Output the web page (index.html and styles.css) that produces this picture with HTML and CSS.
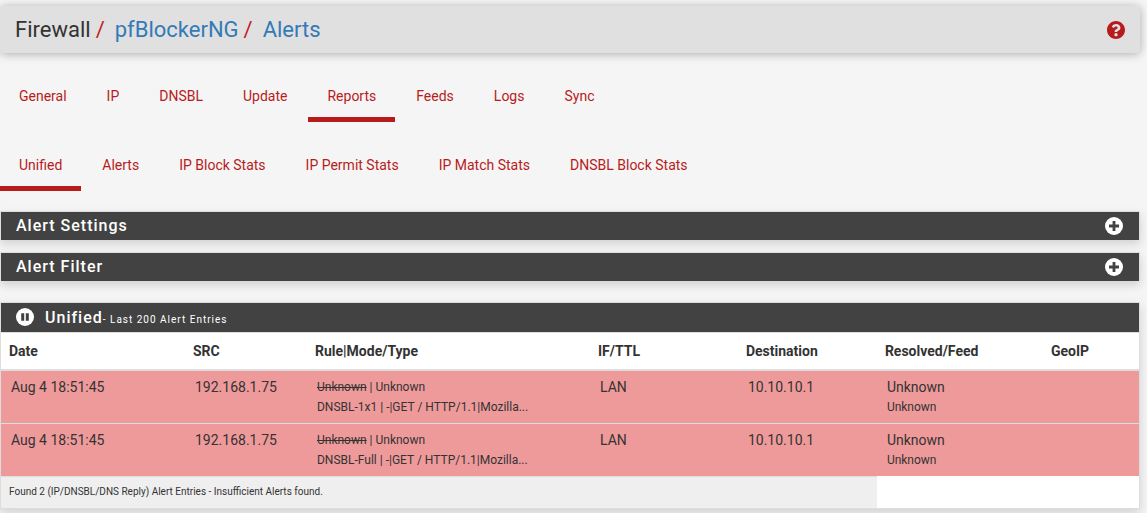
FILE: index.html
```html
<!DOCTYPE html>
<html lang="en">
<head>
<meta charset="utf-8">
<title>Firewall / pfBlockerNG / Alerts</title>
<link rel="stylesheet" href="styles.css">
</head>
<body>
<main class="page">
  <header class="header">
    <nav class="breadcrumb" aria-label="Breadcrumb">
      <span>Firewall</span><span class="sep">/</span><a href="#">pfBlockerNG</a><span class="sep">/</span><a href="#">Alerts</a>
    </nav>
    <a class="help" href="#" aria-label="Help">
      <svg class="icon" viewBox="8 8 496 496"><path fill="currentColor" d="M504 256c0 136.997-111.043 248-248 248S8 392.997 8 256C8 119.083 119.043 8 256 8s248 111.083 248 248zM262.655 90c-54.497 0-89.255 22.957-116.549 63.758-3.536 5.286-2.353 12.415 2.715 16.258l34.699 26.31c5.205 3.947 12.621 3.008 16.665-2.122 17.864-22.658 30.113-35.797 57.303-35.797 20.429 0 45.698 13.148 45.698 32.958 0 14.976-12.363 22.667-32.534 33.976C247.128 238.528 216 254.941 216 296v4c0 6.627 5.373 12 12 12h56c6.627 0 12-5.373 12-12v-1.333c0-28.462 83.186-29.647 83.186-106.667 0-58.002-60.165-102-116.531-102zM256 338c-25.365 0-46 20.635-46 46 0 25.364 20.635 46 46 46s46-20.636 46-46c0-25.364-20.635-46-46-46z"/></svg>
    </a>
  </header>

  <nav class="tabs" aria-label="Sections">
    <a href="#">General</a>
    <a href="#">IP</a>
    <a href="#">DNSBL</a>
    <a href="#">Update</a>
    <a href="#" class="active">Reports</a>
    <a href="#">Feeds</a>
    <a href="#">Logs</a>
    <a href="#">Sync</a>
  </nav>
  <nav class="tabs" aria-label="Reports">
    <a href="#" class="active">Unified</a>
    <a href="#">Alerts</a>
    <a href="#">IP Block Stats</a>
    <a href="#">IP Permit Stats</a>
    <a href="#">IP Match Stats</a>
    <a href="#">DNSBL Block Stats</a>
  </nav>

  <section class="panel collapsed">
    <div class="panel-heading">
      <h2>Alert Settings</h2>
      <button class="icon-button" type="button" aria-label="Expand Alert Settings">
        <svg class="icon" viewBox="0 0 18 18"><circle cx="9" cy="9" r="9" fill="#fff"/><path d="M9 4v10M4 9h10" stroke="#424242" stroke-width="2.8"/></svg>
      </button>
    </div>
  </section>
  <section class="panel collapsed">
    <div class="panel-heading">
      <h2>Alert Filter</h2>
      <button class="icon-button" type="button" aria-label="Expand Alert Filter">
        <svg class="icon" viewBox="0 0 18 18"><circle cx="9" cy="9" r="9" fill="#fff"/><path d="M9 4v10M4 9h10" stroke="#424242" stroke-width="2.8"/></svg>
      </button>
    </div>
  </section>

  <section class="panel report">
    <div class="panel-heading">
      <button class="icon-button" type="button" aria-label="Pause">
        <svg class="icon" viewBox="0 0 18 18"><circle cx="9" cy="9" r="9" fill="#fff"/><path d="M5.200 5.300h3v7.400h-3zM9.800 5.300h3v7.400h-3z" fill="#424242"/></svg>
      </button>
      <h2>Unified<small>- Last 200 Alert Entries</small></h2>
    </div>
    <table class="alerts">
      <colgroup>
        <col class="c-date"><col class="c-src"><col class="c-rule"><col class="c-if"><col class="c-dest"><col class="c-feed"><col>
      </colgroup>
      <thead>
        <tr><th>Date</th><th>SRC</th><th>Rule|Mode/Type</th><th>IF/TTL</th><th>Destination</th><th>Resolved/Feed</th><th>GeoIP</th></tr>
      </thead>
      <tbody>
        <tr>
          <td>Aug 4 18:51:45</td><td>192.168.1.75</td>
          <td><small><s>Unknown</s> | Unknown<br>DNSBL-1x1 | -|GET / HTTP/1.1|Mozilla...</small></td>
          <td>LAN</td><td>10.10.10.1</td><td>Unknown<small>Unknown</small></td><td></td>
        </tr>
        <tr>
          <td>Aug 4 18:51:45</td><td>192.168.1.75</td>
          <td><small><s>Unknown</s> | Unknown<br>DNSBL-Full | -|GET / HTTP/1.1|Mozilla...</small></td>
          <td>LAN</td><td>10.10.10.1</td><td>Unknown<small>Unknown</small></td><td></td>
        </tr>
      </tbody>
      <tfoot>
        <tr><td colspan="5">Found 2 (IP/DNSBL/DNS Reply) Alert Entries - Insufficient Alerts found.</td></tr>
      </tfoot>
    </table>
  </section>
</main>
</body>
</html>
```
FILE: styles.css
```css
* {
  box-sizing: border-box;
}

body {
  margin: 0;
  background: #f5f5f5;
  color: #333;
  font: 14px/20px Roboto, "Liberation Sans", sans-serif;
}

a {
  text-decoration: none;
}

.page {
  padding: 6px 7px 4px 0;
}

.header {
  display: flex;
  align-items: center;
  justify-content: space-between;
  height: 47px;
  padding: 0 15px;
  background: #e0e0e0;
  border-radius: 4px;
  box-shadow: 0 1px 10px rgba(0, 0, 0, 0.3);
}

.breadcrumb {
  font-size: 22px;
  line-height: 24px;
}

.breadcrumb a {
  color: #337ab7;
}

.sep {
  padding: 0 10px 0 5px;
  color: #c51e1e;
}

.icon {
  display: block;
  width: 18px;
  height: 18px;
}

.help {
  color: #b71c1c;
}

.tabs {
  display: flex;
  flex-wrap: wrap;
  gap: 2px;
  margin-top: 23px;
}

.tabs a {
  padding: 10px 19px 11px;
  border-bottom: 5px solid transparent;
  color: #b71c1c;
}

.tabs .active {
  border-bottom-color: #b71c1c;
}

.tabs + .panel {
  margin-top: 20px;
}

.panel {
  margin-top: 12px;
  border: 1px solid #ddd;
  background: #fff;
  box-shadow: 0 4px 10px rgba(0, 0, 0, 0.15);
}

.collapsed {
  border-bottom: 0;
}

.panel-heading {
  display: flex;
  align-items: center;
  justify-content: space-between;
  height: 28px;
  padding: 0 16px 0 15px;
  background: #424242;
  color: #fff;
}

.panel-heading h2 {
  margin: 0;
  font-size: 16px;
  font-weight: 500;
  line-height: 20px;
  letter-spacing: 1px;
}

.panel-heading small {
  font-size: 10px;
  font-weight: 400;
}

.icon-button {
  padding: 0;
  border: 0;
  background: none;
}

.report {
  margin-top: 21px;
}

.report .panel-heading {
  justify-content: flex-start;
  gap: 11px;
  height: 29px;
}

.report .icon-button {
  padding-bottom: 2px;
}

.report h2 {
  padding-top: 2px;
}

.alerts {
  width: 100%;
  table-layout: fixed;
  border-collapse: separate;
  border-spacing: 0;
  border-top: 1px solid #ddd;
}

.c-date { width: 16.17%; }
.c-src { width: 10.72%; }
.c-rule { width: 24.87%; }
.c-if { width: 13%; }
.c-dest { width: 12.21%; }
.c-feed { width: 14.59%; }

.alerts th {
  padding: 8px;
  border-bottom: 2px solid #ddd;
  font-weight: 700;
  text-align: left;
}

.alerts tbody td {
  padding: 6px 10px;
  background: #ef9a9a;
  vertical-align: top;
}

.alerts tbody tr + tr td {
  border-top: 1px solid #ddd;
}

.alerts tbody small {
  display: block;
  font-size: 12px;
}

.alerts tfoot td {
  padding: 5px 8px 6px;
  border-top: 1px solid #ddd;
  background: #efefef;
  font-size: 10px;
}
```
